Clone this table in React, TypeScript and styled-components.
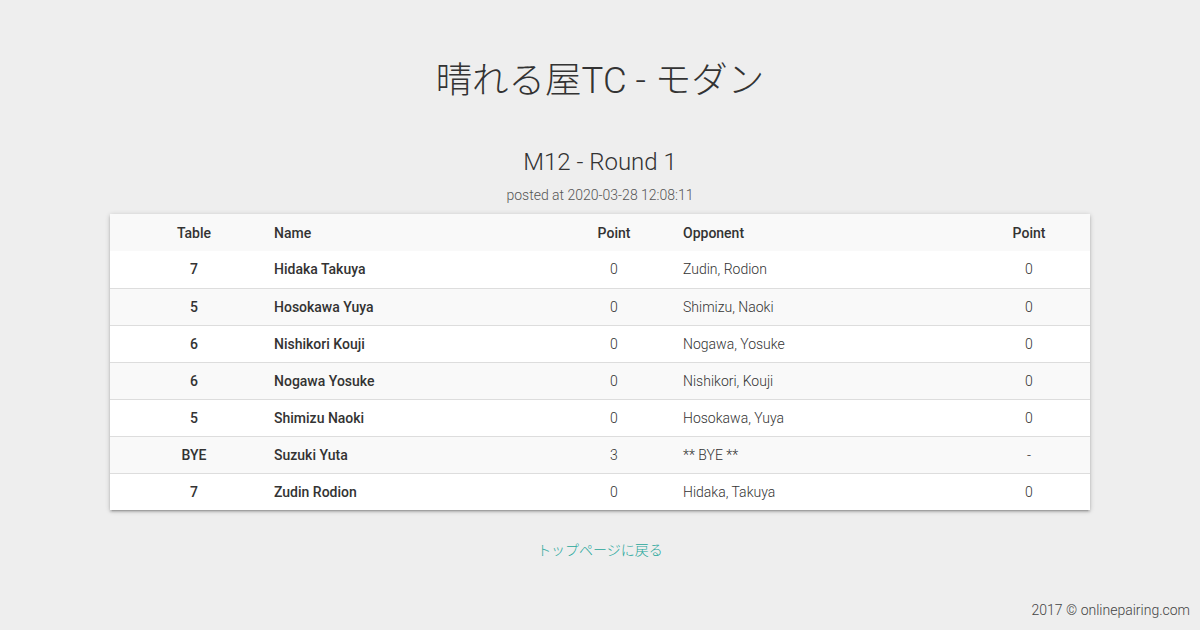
import styled, { createGlobalStyle } from "styled-components";

const GlobalStyle = createGlobalStyle`
  body {
    margin: 0;
    background: #eeeeee;
    font-family: Roboto, "Noto Sans CJK JP", sans-serif;
    font-weight: 300;
    color: #333333;
  }
`;

const Page = styled.div`
  display: flex;
  flex-direction: column;
  align-items: center;
  padding-top: 59px;
  min-height: 630px;
  box-sizing: border-box;
`;

const Title = styled.h1`
  margin: 0;
  font-size: 36.5px;
  line-height: 44px;
  font-weight: 300;
  color: #333333;
`;

const Subtitle = styled.h2`
  margin: 44px 0 0;
  font-size: 24px;
  line-height: 30px;
  font-weight: 300;
  color: #333333;
`;

const Posted = styled.div`
  margin-top: 8px;
  font-size: 14px;
  line-height: 20px;
  color: #555555;
`;

const Card = styled.div`
  margin-top: 9px;
  width: 980px;
  background: #ffffff;
  box-shadow: 0 2px 2px 0 rgba(0, 0, 0, 0.14), 0 3px 1px -2px rgba(0, 0, 0, 0.12),
    0 1px 5px 0 rgba(0, 0, 0, 0.2);
`;

const Table = styled.table`
  width: 100%;
  border-collapse: collapse;
  table-layout: fixed;
  font-size: 14px;
`;

const Row = styled.tr<{ $striped?: boolean }>`
  height: 37px;
  background: ${(p) => (p.$striped ? "#f9f9f9" : "#ffffff")};
  border-bottom: 1px solid #dddddd;
  &:last-child {
    border-bottom: none;
  }
`;

const Cell = styled.td<{ $align?: "left" | "center"; $bold?: boolean; $first?: boolean }>`
  padding: 0 8px 0 ${(p) => (p.$first ? "20px" : "8px")};
  text-align: ${(p) => p.$align ?? "left"};
  font-weight: ${(p) => (p.$bold ? 500 : 300)};
  color: #333333;
  white-space: nowrap;
  box-sizing: border-box;
`;

const HeadCell = styled(Cell).attrs({ as: "th" })`
  font-weight: 500;
`;

const BackLink = styled.a`
  margin-top: 30px;
  font-size: 14px;
  line-height: 20px;
  color: #26a69a;
  text-decoration: none;
`;

const Footer = styled.div`
  align-self: stretch;
  margin-top: 40px;
  padding-right: 10px;
  text-align: right;
  font-size: 14px;
  line-height: 20px;
  color: #444444;
`;

const rows = [
  { table: "7", name: "Hidaka Takuya", point: "0", opp: "Zudin, Rodion", oppPoint: "0" },
  { table: "5", name: "Hosokawa Yuya", point: "0", opp: "Shimizu, Naoki", oppPoint: "0" },
  { table: "6", name: "Nishikori Kouji", point: "0", opp: "Nogawa, Yosuke", oppPoint: "0" },
  { table: "6", name: "Nogawa Yosuke", point: "0", opp: "Nishikori, Kouji", oppPoint: "0" },
  { table: "5", name: "Shimizu Naoki", point: "0", opp: "Hosokawa, Yuya", oppPoint: "0" },
  { table: "BYE", name: "Suzuki Yuta", point: "3", opp: "** BYE **", oppPoint: "-" },
  { table: "7", name: "Zudin Rodion", point: "0", opp: "Hidaka, Takuya", oppPoint: "0" },
];

export default function App() {
  return (
    <>
      <GlobalStyle />
      <Page>
        <Title>晴れる屋TC - モダン</Title>
        <Subtitle>M12 - Round 1</Subtitle>
        <Posted>posted at 2020-03-28 12:08:11</Posted>
        <Card>
          <Table>
            <colgroup>
              <col style={{ width: 156 }} />
              <col style={{ width: 287 }} />
              <col style={{ width: 122 }} />
              <col style={{ width: 293 }} />
              <col style={{ width: 122 }} />
            </colgroup>
            <thead>
              <Row $striped>
                <HeadCell $align="center" $first>Table</HeadCell>
                <HeadCell>Name</HeadCell>
                <HeadCell $align="center">Point</HeadCell>
                <HeadCell>Opponent</HeadCell>
                <HeadCell $align="center">Point</HeadCell>
              </Row>
            </thead>
            <tbody>
              {rows.map((r, i) => (
                <Row key={i} $striped={i % 2 === 1}>
                  <Cell $align="center" $bold $first>{r.table}</Cell>
                  <Cell $bold>{r.name}</Cell>
                  <Cell $align="center">{r.point}</Cell>
                  <Cell>{r.opp}</Cell>
                  <Cell $align="center">{r.oppPoint}</Cell>
                </Row>
              ))}
            </tbody>
          </Table>
        </Card>
        <BackLink href="#">トップページに戻る</BackLink>
        <Footer>2017 © onlinepairing.com</Footer>
      </Page>
    </>
  );
}
